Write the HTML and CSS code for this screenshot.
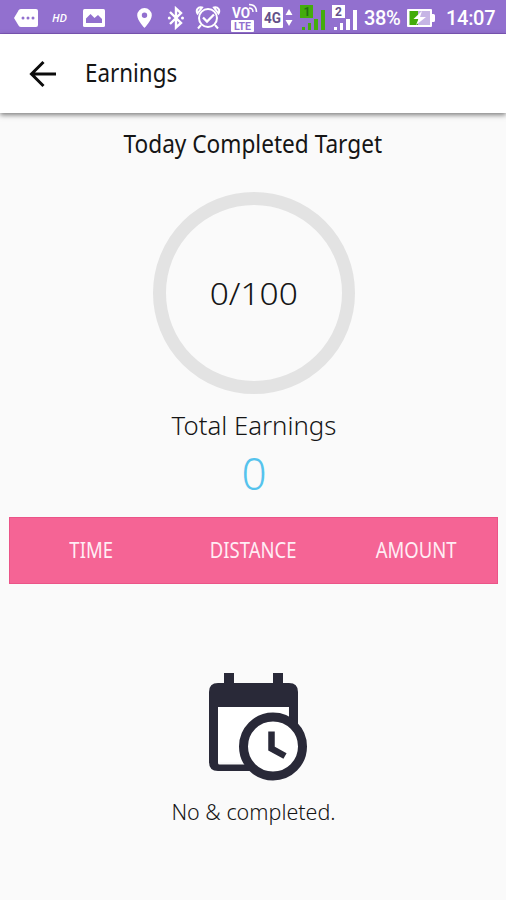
FILE: index.html
```html
<!DOCTYPE html>
<html lang="en">
<head>
<meta charset="utf-8">
<meta name="viewport" content="width=device-width, initial-scale=1">
<title>Earnings</title>
<link rel="stylesheet" href="styles.css">
</head>
<body>
<div class="status">
  <svg class="more" width="24" height="18" viewBox="0 0 24 18"><path fill="#fff" d="M7 0h15q2 0 2 2v14q0 2-2 2H7q-1.500 0-2.300-1.200L0 9l4.700-7.800Q5.500 0 7 0z"/><g fill="#9270cf"><circle cx="9" cy="9" r="1.500"/><circle cx="14" cy="9" r="1.500"/><circle cx="19" cy="9" r="1.500"/></g></svg>
  <span class="hd">HD</span>
  <svg class="photo" width="22" height="18" viewBox="0 0 22 18"><rect width="22" height="18" rx="1.500" fill="#fff"/><path fill="#9270cf" d="M3 14V9.500L7.500 5l4 4L15 6l4 4v4z"/></svg>
  <svg class="pin" width="15" height="20" viewBox="0 0 15 20"><path fill="#fff" fill-rule="evenodd" d="M7.500 0A7.300 7.300 0 0 0 .200 7.300C.200 12.500 7.500 20 7.500 20s7.300-7.500 7.300-12.700A7.300 7.300 0 0 0 7.500 0zm0 4.500a2.700 2.700 0 1 1 0 5.400 2.700 2.700 0 0 1 0-5.400z"/></svg>
  <svg class="bluetooth" width="18" height="24" viewBox="0 0 18 24"><path fill="none" stroke="#fff" stroke-width="2.400" d="M3 6l11 11-5 4.500v-19L14 7 3 18"/><circle cx="2.300" cy="12" r="1.500" fill="#fff"/><circle cx="15.500" cy="12" r="1.500" fill="#fff"/></svg>
  <svg class="alarm" width="26" height="25" viewBox="0 0 26 25"><g fill="none" stroke="#fff" stroke-width="2"><circle cx="13" cy="13" r="9"/><path d="M8 12.500l4 4 7-7" stroke-width="2.300"/><path d="M2.500 8.500C.500 5 3 1.500 7 2.500zM23.500 8.500c2-3.500-.500-7-4.500-6zM6 20l-3 3.500M20 20l3 3.500"/></g></svg>
  <svg class="volte" width="27" height="29" viewBox="0 0 27 29"><text x="1" y="14.500" class="vo" textLength="18" lengthAdjust="spacingAndGlyphs">VO</text><path d="M18 5q4 0 4 4M18 1.500q7.500 0 7.500 7.500" fill="none" stroke="#fff" stroke-width="1.500"/><rect x="0" y="17" width="23" height="12" rx="1" fill="#fff"/><text x="3" y="27" class="lte" textLength="17" lengthAdjust="spacingAndGlyphs">LTE</text></svg>
  <svg class="data" width="31" height="22" viewBox="0 0 31 22"><rect width="21" height="21" rx="1" fill="#fff"/><text x="2" y="15.500" class="fourg" textLength="17" lengthAdjust="spacingAndGlyphs">4G</text><path fill="#fff" d="M23.500 8l3.500-6 3.500 6zM23.500 13h7L27 19z"/></svg>
  <svg class="signal" width="26" height="26" viewBox="0 0 26 26"><g fill="#43ac0c"><path d="M0 0h13v13H0z"/><path d="M2 22h3v3H2zM8 18h3v7H8zM14 14h4v11h-4zM21 5h4v20h-4z"/></g><text x="3.500" y="11" class="sim one">1</text></svg>
  <svg class="signal" width="26" height="26" viewBox="0 0 26 26"><g fill="#fff"><path d="M0 0h13v13H0z"/><path d="M2 22h3v3H2zM8 18h3v7H8zM14 14h4v11h-4zM21 5h4v20h-4z"/></g><text x="3" y="11" class="sim">2</text></svg>
  <span class="percent">38%</span>
  <svg class="battery" width="28" height="18" viewBox="0 0 28 18"><path fill="#fff" d="M1 0h23q1 0 1 1v4h1.500q1.500 0 1.500 1.500v5q0 1.500-1.500 1.500H25v4q0 1-1 1H1q-1 0-1-1V1q0-1 1-1z"/><path fill="#c6b5e5" d="M10 2h13v14H10z"/><path fill="#43ac0c" d="M2.500 2H11v14H2.500z"/><path fill="#fff" d="M15 2L6.500 10h5L9 16l10-8h-6z"/></svg>
  <span class="clock">14:07</span>
</div>
<header class="appbar">
  <svg class="back" width="28" height="28" viewBox="0 0 28 28"><path fill="none" stroke="#0c0c0c" stroke-width="3" d="M27 14H3M14.500 2L2.500 14l12 12"/></svg>
  <h1 class="title">Earnings</h1>
</header>
<main class="content">
  <h2 class="target">Today Completed Target</h2>
  <div class="ring"><span class="progress">0/100</span></div>
  <div class="label">Total Earnings</div>
  <div class="total">0</div>
  <div class="columns"><span>TIME</span><span>DISTANCE</span><span>AMOUNT</span></div>
  <svg class="calendar" width="100" height="110" viewBox="0 0 100 110"><path fill="#292938" d="M15 0h10v10h39V0h10v10h6q9 0 9 9v43H80V34H9v56q0 1.500 1.500 1.500H48V98H9q-9 0-9-9V19q0-9 9-9h6z"/><path fill="#fff" d="M9 34h70v55H9z"/><circle cx="64" cy="73.500" r="29.500" fill="#fff" stroke="#292938" stroke-width="9"/><path fill="none" stroke="#292938" stroke-width="6.500" d="M62.500 58.500v17L76 83"/></svg>
  <p class="empty">No &amp; completed.</p>
</main>
</body>
</html>
```
FILE: styles.css
```css
* { box-sizing: border-box; }
body {
  margin: 0;
  height: 900px;
  background: #fafafa;
  font-family: "Noto Sans", "Open Sans", sans-serif;
  color: #151515;
  overflow: hidden;
}
svg { display: block; flex: none; }
h1, h2, p { margin: 0; font-weight: 400; }

.status {
  display: flex;
  align-items: center;
  height: 34px;
  padding: 2px 0 0 14px;
  background: #9270cf;
  border-bottom: 1px solid #8059bd;
  color: #fff;
  font-family: Roboto, sans-serif;
  white-space: nowrap;
}
.hd { width: 16px; margin-left: 14px; font: italic 600 11px/18px "Open Sans", sans-serif; }
.photo { margin-left: 15px; }
.pin { margin-left: 32px; }
.bluetooth { margin-left: 15px; }
.alarm { margin-left: 10px; }
.volte { margin-left: 10px; }
.data { margin-left: 4px; }
.signal { margin-left: 7px; }
.signal + .signal { margin-left: 6px; }
.vo { font: 700 14px Roboto, sans-serif; fill: #fff; }
.lte { font: 700 10px Roboto, sans-serif; fill: #9270cf; }
.fourg { font: 700 14px Roboto, sans-serif; fill: #63518a; }
.sim { font: 700 12px Roboto, sans-serif; fill: #63518a; }
.one { fill: #246f13; }
.percent { width: 37px; margin-left: 6px; font-size: 20px; font-weight: 500; letter-spacing: -.4px; }
.battery { margin-left: 6px; }
.clock { margin-left: 11px; font-size: 20px; font-weight: 500; letter-spacing: -.3px; }

.appbar {
  display: flex;
  align-items: center;
  height: 79px;
  padding: 0 0 0 29px;
  background: #fff;
  box-shadow: 0 2px 5px rgba(0, 0, 0, .5);
}
.title {
  margin: 0 0 4px 28px;
  font-size: 25px;
  line-height: 34px;
  transform: scaleX(.895);
  transform-origin: left;
}

.content { display: flex; flex-direction: column; align-items: center; }
.target {
  margin-top: 13px;
  font-size: 25px;
  line-height: 34px;
  transform: scaleX(.905);
  white-space: nowrap;
}
.ring {
  display: flex;
  align-items: center;
  justify-content: center;
  width: 202px;
  height: 202px;
  margin: 32px 0 0 1px;
  padding-bottom: 1px;
  border: 13px solid #e3e3e3;
  border-radius: 50%;
}
.progress { font-size: 31px; font-weight: 300; transform: scaleX(1.08); }
.label { margin: 13px 0 0 1px; font-size: 25px; font-weight: 300; line-height: 36px; transform: scaleX(1.03); }
.total { margin-left: 2px; font-size: 44px; font-weight: 300; line-height: 60px; color: #55c3ed; }
.columns {
  display: grid;
  grid-template-columns: repeat(3, 1fr);
  align-items: center;
  align-self: stretch;
  height: 67px;
  margin: 14px 8px 0 9px;
  padding-bottom: 2px;
  background: #f56495;
  border: 1px solid #eb5488;
  color: #ffedf4;
  font-size: 21px;
  text-align: center;
}
.columns span { transform: scaleX(.88); }
.calendar { margin: 89px 0 0 11px; }
.empty { margin: 14px 0 0 1px; font-size: 21.500px; font-weight: 300; line-height: 30px; }
```
